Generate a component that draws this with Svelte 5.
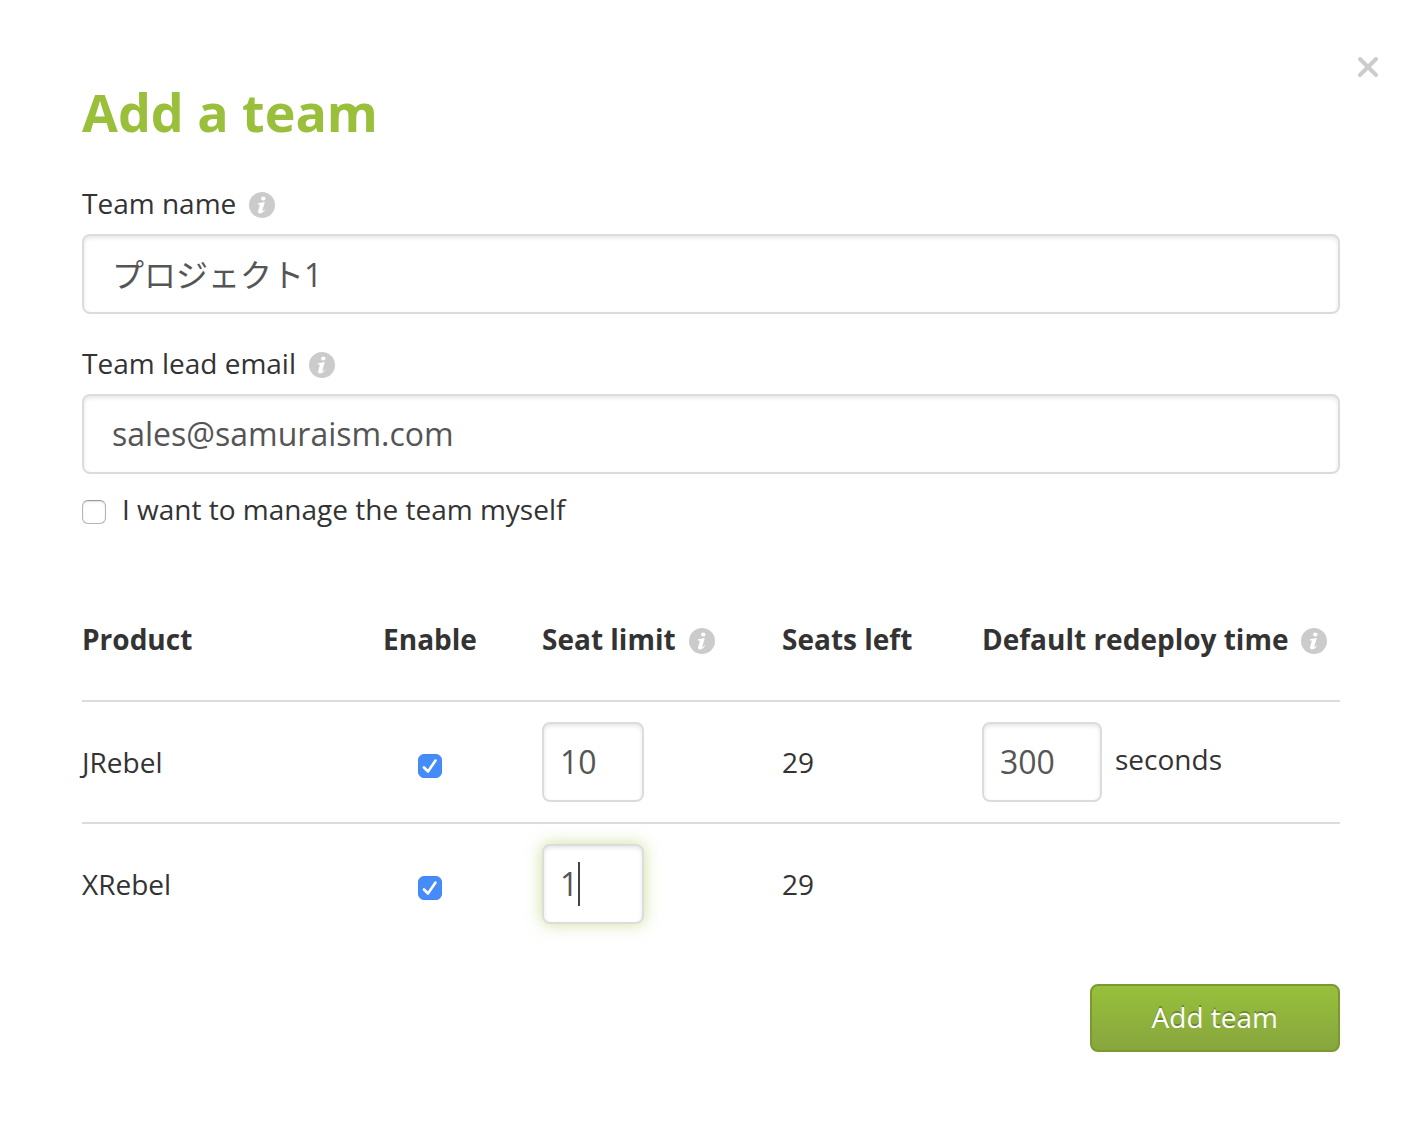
<script>
  let teamName = $state("プロジェクト1");
  let email = $state("sales@samuraism.com");
  let manageMyself = $state(false);
  let products = $state([
    { name: "JRebel", enabled: true, limit: "10", left: 29, redeploy: "300" },
    { name: "XRebel", enabled: true, limit: "1", left: 29, redeploy: null },
  ]);
  let active = $state("XRebel");

  // one digit is 18px wide, after 18px of border and padding
  function caretLeft(value) {
    return 18 + String(value).length * 18;
  }
</script>

{#snippet info(text)}
  <svg class="info" viewBox="0 0 26 26" role="img" aria-label={text}>
    <circle cx="13" cy="13" r="13" fill="#cbcbcb" />
    <ellipse cx="14.3" cy="6.4" rx="2.2" ry="2" fill="#fff" />
    <path
      d="M9 11.3c2-.2 4-.8 6.200-1.400l.5.3-2.300 8c-.2.8.1 1 .6.700.5-.3 1-.8 1.400-1.300l.6.5c-1.400 2-3 3.300-4.900 3.300-1.700 0-2.400-1-1.900-2.700l1.500-5.100c.2-.8.1-1.200-.7-1.200H8.800z"
      fill="#fff"
    />
  </svg>
{/snippet}

{#snippet tick()}
  <svg class="tick" viewBox="0 0 24 24" aria-hidden="true">
    <path d="M6 13.500 10 17.500 17.500 6.500" />
  </svg>
{/snippet}

<main>
  <button class="close" type="button" aria-label="Close">
    <svg viewBox="0 0 22 22" aria-hidden="true">
      <path d="M3 3 19 19M19 3 3 19" />
    </svg>
  </button>

  <h1>Add a team</h1>

  <form onsubmit={(e) => e.preventDefault()}>
    <div class="field">
      <div class="caption">
        <label for="team-name">Team name</label>
        {@render info("About team name")}
      </div>
      <input class="text" id="team-name" type="text" bind:value={teamName} />
    </div>

    <div class="field">
      <div class="caption">
        <label for="team-email">Team lead email</label>
        {@render info("About team lead email")}
      </div>
      <input class="text" id="team-email" type="text" bind:value={email} />
    </div>

    <label class="manage">
      <span class="check">
        <input type="checkbox" bind:checked={manageMyself} />
        {@render tick()}
      </span>
      I want to manage the team myself
    </label>

    <table>
      <colgroup>
        <col class="col-product" />
        <col class="col-enable" />
        <col class="col-limit" />
        <col class="col-left" />
        <col />
      </colgroup>
      <thead>
        <tr>
          <th>Product</th>
          <th class="enable">Enable</th>
          <th>
            <div class="caption">Seat limit {@render info("About seat limit")}</div>
          </th>
          <th>Seats left</th>
          <th>
            <div class="caption">
              Default redeploy time {@render info("About redeploy time")}
            </div>
          </th>
        </tr>
      </thead>
      <tbody>
        {#each products as product}
          <tr>
            <td>{product.name}</td>
            <td class="enable">
              <span class="check">
                <input
                  type="checkbox"
                  aria-label="Enable {product.name}"
                  bind:checked={product.enabled}
                />
                {@render tick()}
              </span>
            </td>
            <td>
              <div class="limit-box">
                <!-- svelte-ignore a11y_autofocus -->
                <input
                  class="text limit"
                  class:active={active === product.name}
                  type="text"
                  aria-label="{product.name} seat limit"
                  autofocus={active === product.name}
                  onfocus={() => (active = product.name)}
                  bind:value={product.limit}
                />
                {#if active === product.name}
                  <span class="caret" style="left: {caretLeft(product.limit)}px"></span>
                {/if}
              </div>
            </td>
            <td>{product.left}</td>
            <td>
              {#if product.redeploy !== null}
                <label class="redeploy">
                  <input class="text time" type="text" bind:value={product.redeploy} />
                  <span class="unit">seconds</span>
                </label>
              {/if}
            </td>
          </tr>
        {/each}
      </tbody>
    </table>

    <div class="actions">
      <button class="submit" type="submit">Add team</button>
    </div>
  </form>
</main>

<style>
  :global(body) {
    margin: 0;
    background: #fff;
  }

  main {
    position: relative;
    padding: 76px 68px 82px 82px;
    color: #333;
    font-family: "Open Sans", "Noto Sans CJK JP", sans-serif;
    font-size: 28px;
    line-height: 38px;
  }

  h1 {
    margin: 0 0 36px;
    color: #99bf3b;
    font-size: 52px;
    font-weight: 700;
    line-height: 72px;
  }

  button,
  input {
    font-family: inherit;
  }

  .close {
    position: absolute;
    top: 56px;
    right: 29px;
    padding: 0;
    border: 0;
    background: none;
    line-height: 0;
    cursor: pointer;
  }

  .close svg {
    width: 22px;
    height: 22px;
    fill: none;
    stroke: #ccc;
    stroke-width: 4;
    stroke-linecap: round;
  }

  .caption {
    display: flex;
    align-items: center;
    gap: 13px;
    white-space: nowrap;
  }

  .info {
    flex: none;
    width: 26px;
    height: 26px;
    margin-top: 4px;
  }

  .field {
    margin-bottom: 30px;
  }

  .field .caption {
    margin-bottom: 12px;
  }

  .text {
    display: block;
    box-sizing: border-box;
    width: 100%;
    height: 80px;
    padding: 0 28px 2px;
    border: 2px solid #dcdcdc;
    border-radius: 8px;
    outline: none;
    background: #fff;
    box-shadow: inset 0 2px 4px rgba(0, 0, 0, 0.1);
    color: #555;
    font-size: 32px;
  }

  .text.limit {
    width: 102px;
    padding: 0 16px 2px;
    caret-color: transparent;
  }

  .text.time {
    width: 120px;
    padding: 0 16px 2px;
  }

  .text.active {
    box-shadow:
      inset 0 2px 4px rgba(0, 0, 0, 0.1),
      0 0 16px rgba(153, 191, 59, 0.5);
  }

  .limit-box {
    position: relative;
  }

  .caret {
    position: absolute;
    top: 18px;
    width: 2px;
    height: 44px;
    background: #444;
    pointer-events: none;
  }

  .manage {
    display: flex;
    align-items: center;
    gap: 16px;
    margin-top: -14px;
  }

  .check {
    display: inline-grid;
    flex: none;
    width: 24px;
    height: 24px;
  }

  .manage .check {
    margin-top: 6px;
  }

  .check > :global(*) {
    grid-area: 1 / 1;
  }

  .check input {
    box-sizing: border-box;
    width: 24px;
    height: 24px;
    margin: 0;
    border: 1px solid #b4b4b4;
    border-top-color: #999;
    border-radius: 6px;
    background: #fff;
    box-shadow: inset 0 1px 2px rgba(0, 0, 0, 0.12);
    appearance: none;
  }

  .check input:checked {
    border-color: #4287f8;
    background: #468bfa;
    box-shadow: none;
  }

  .tick {
    width: 24px;
    height: 24px;
    fill: none;
    stroke: #fff;
    stroke-width: 2.6;
    stroke-linecap: round;
    stroke-linejoin: round;
    pointer-events: none;
  }

  .check input:not(:checked) + .tick {
    visibility: hidden;
  }

  table {
    width: 100%;
    margin-top: 52px;
    border-collapse: separate;
    border-spacing: 0;
    table-layout: fixed;
  }

  .col-product {
    width: 300px;
  }

  .col-enable {
    width: 160px;
  }

  .col-limit {
    width: 240px;
  }

  .col-left {
    width: 200px;
  }

  th,
  td {
    padding: 0;
    text-align: left;
    vertical-align: middle;
  }

  th {
    height: 118px;
    padding-bottom: 2px;
    font-weight: 700;
  }

  td {
    height: 80px;
    padding: 20px 0;
    border-top: 2px solid #dcdcdc;
  }

  .enable {
    padding-right: 64px;
    text-align: center;
  }

  .enable .check {
    vertical-align: middle;
  }

  .redeploy {
    display: flex;
    align-items: center;
    gap: 13px;
  }

  .unit {
    padding-bottom: 6px;
  }

  .actions {
    display: flex;
    justify-content: flex-end;
    margin-top: 40px;
  }

  .submit {
    height: 68px;
    padding: 0 60px 2px;
    border: 2px solid #7a9a31;
    border-radius: 8px;
    background: linear-gradient(#98c03b, #87a63e);
    color: #fff;
    font-size: 28px;
    text-shadow: 0 -2px 0 rgba(0, 0, 0, 0.25);
    cursor: pointer;
  }
</style>
